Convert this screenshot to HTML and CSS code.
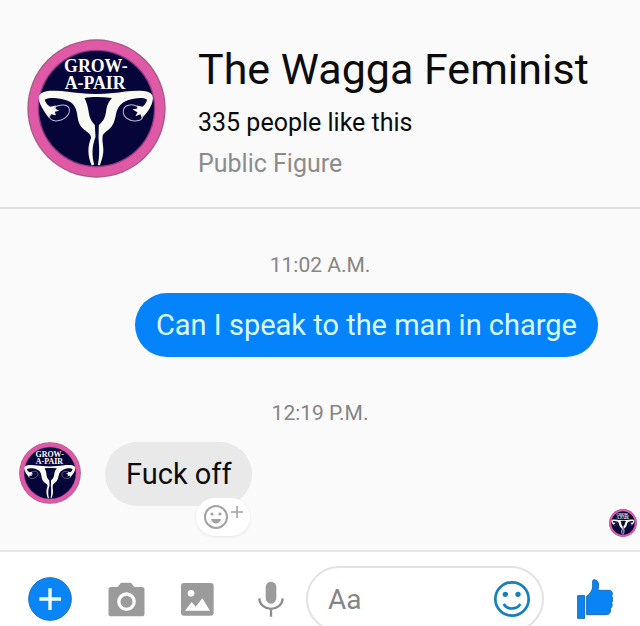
FILE: index.html
```html
<!DOCTYPE html>
<html lang="en">
<head>
<meta charset="utf-8">
<meta name="viewport" content="width=device-width, initial-scale=1">
<title>The Wagga Feminist</title>
<link rel="stylesheet" href="styles.css">
</head>
<body>
<svg class="sprite" aria-hidden="true">
  <symbol id="logo" viewBox="53 28 414 414">
    <circle cx="260" cy="235" r="206" fill="#a85a88"/>
    <circle cx="260" cy="235" r="202" fill="#df59a6"/>
    <circle cx="260" cy="235" r="175" fill="#8d3a80"/>
    <circle cx="260" cy="235" r="171" fill="#06053a"/>
    <text x="258" y="126" class="logo-text">GROW-</text>
    <text x="256" y="178" class="logo-text">A-PAIR</text>
    <g fill="#fafaf5">
      <path d="M88 204C88 188 106 182 128 182C160 181 184 187 208 189C242 193 276 193 310 189C336 186 362 181 392 182C414 182 430 190 428 206C426 226 414 244 400 258L395 265L391 252L376 258L382 246L367 238L382 235L380 226L397 230C405 222 411 214 410 208C396 200 370 205 351 211C334 217 322 231 318 252C314 272 311 284 298 296C286 307 278 310 278 321C276 340 286 358 276 386L270 404L264 403C270 376 268 352 266 322L267 284C282 272 287 258 289 240C291 224 299 212 306 204C276 200 244 200 224 204C231 216 235 232 237 248C239 264 246 276 255 284L257 320C246 348 246 374 253 402L246 405C234 378 232 350 244 322C243 309 230 305 218 293C206 281 205 268 202 250C199 228 188 216 172 211C152 204 124 201 106 208C107 216 113 224 122 230L140 226L138 236L149 242L136 245L139 255L125 252L119 264C102 242 89 222 88 204Z"/>
    </g>
    <g fill="none" stroke="#bcbcd8" stroke-width="3">
      <path d="M134 232C150 220 178 222 179 238C181 256 161 272 140 272C128 272 120 266 119 256"/>
      <path d="M382 229C364 219 342 225 340 241C337 260 356 272 376 272C390 272 398 266 398 256"/>
    </g>
  </symbol>
</svg>

<div class="app">
  <header class="profile">
    <svg class="avatar avatar-large" role="img" aria-label="Grow-a-pair logo"><use href="#logo"/></svg>
    <div class="profile-info">
      <h1 class="name">The Wagga Feminist</h1>
      <p class="likes">335 people like this</p>
      <p class="category">Public Figure</p>
    </div>
  </header>

  <main class="thread">
    <time class="stamp">11:02 A.M.</time>
    <div class="row row-sent">
      <p class="bubble bubble-sent">Can I speak to the man in charge</p>
    </div>
    <time class="stamp">12:19 P.M.</time>
    <div class="row row-received">
      <svg class="avatar avatar-medium" aria-hidden="true"><use href="#logo"/></svg>
      <div class="message">
        <p class="bubble bubble-received">Fuck off</p>
        <button class="react" type="button" aria-label="Add reaction">
          <svg width="40" height="28" viewBox="0 0 40 28" fill="none" stroke="#a3a3a3">
            <circle cx="13" cy="14" r="11" stroke-width="2"/>
            <path d="M8 16H18C17 22 9 22 8 16Z" fill="#a3a3a3" stroke="none"/>
            <circle cx="9" cy="11" r="1.6" fill="#a3a3a3" stroke="none"/>
            <circle cx="17" cy="11" r="1.6" fill="#a3a3a3" stroke="none"/>
            <path d="M34 3V15M28 9H40" stroke-width="1.6"/>
          </svg>
        </button>
      </div>
    </div>
    <div class="receipt">
      <svg class="avatar avatar-small" role="img" aria-label="Seen"><use href="#logo"/></svg>
    </div>
  </main>

  <form class="composer">
    <div class="tools">
      <button type="button" aria-label="More">
        <svg width="44" height="44" viewBox="84 97 132 132">
          <circle cx="150" cy="163" r="64" fill="#0a85f7" stroke="#1673c4" stroke-width="3"/>
          <path d="M150 131V196M118 163H183" stroke="#f2ffff" stroke-width="10"/>
        </svg>
      </button>
      <button type="button" aria-label="Camera">
        <svg width="37" height="35" viewBox="323 107 110 105">
          <path d="M332 122H352L359 112Q361 109 365 109H388Q392 109 394 112L401 122H424Q432 122 432 130V202Q432 210 424 210H332Q324 210 324 202V130Q324 122 332 122Z" fill="#9b9b9b"/>
          <circle cx="378" cy="166" r="23" fill="none" stroke="#fff" stroke-width="10"/>
        </svg>
      </button>
      <button type="button" aria-label="Photos">
        <svg width="33" height="33" viewBox="543 113 99 99">
          <rect x="543" y="113" width="98" height="98" rx="9" fill="#9b9b9b"/>
          <circle cx="573" cy="144" r="10" fill="#fff"/>
          <path d="M555 196L575 170L587 184L607 159L630 196Z" fill="#fff"/>
        </svg>
      </button>
      <button class="mic" type="button" aria-label="Voice message">
        <svg width="26" height="36" viewBox="770 111 78 108" fill="none">
          <rect x="793" y="113" width="32" height="66" rx="16" fill="#9b9b9b"/>
          <path d="M774 163C776 205 842 205 844 163M809 194V218" stroke="#8d8d8d" stroke-width="7"/>
        </svg>
      </button>
    </div>
    <div class="field">
      <input type="text" placeholder="Aa" aria-label="Message">
      <button type="button" aria-label="Emoji">
        <svg width="36" height="36" viewBox="582 109 108 108" fill="none" stroke="#167fbd">
          <circle cx="636" cy="163" r="50" stroke-width="8"/>
          <circle cx="616" cy="149" r="8" fill="#167fbd" stroke="none"/>
          <circle cx="654" cy="149" r="8" fill="#167fbd" stroke="none"/>
          <path d="M611 178C622 196 650 196 661 178" stroke-width="8"/>
        </svg>
      </button>
    </div>
    <button class="like" type="button" aria-label="Send a like">
      <svg width="36" height="40" viewBox="829 98 108 120" fill="#0a84f5" stroke="#1a6fb5" stroke-width="3">
        <path d="M831 148H852V216H831Z"/>
        <path d="M858 150C868 143 875 133 876 121V104C877 99 882 99 887 102C894 107 895 115 892 132H927C936 134 937 143 933 149C938 155 937 163 933 169C936 176 934 183 929 187C931 197 927 204 918 205H858Z"/>
      </svg>
    </button>
  </form>
</div>
</body>
</html>
```
FILE: styles.css
```css
* {
  box-sizing: border-box;
}

body {
  margin: 0;
  background: #fafafa;
  color: #0c0c0c;
  font-family: Roboto, "Liberation Sans", sans-serif;
}

h1,
p {
  margin: 0;
  font-weight: 400;
}

button {
  display: flex;
  align-items: center;
  justify-content: center;
  flex: none;
  padding: 0;
  border: 0;
  background: none;
  cursor: pointer;
}

.sprite {
  display: none;
}

.logo-text {
  fill: #fff;
  font-family: "Liberation Serif", serif;
  font-size: 53px;
  font-weight: 700;
  text-anchor: middle;
}

.app {
  display: flex;
  flex-direction: column;
  height: 100vh;
  overflow: hidden;
}

.avatar {
  display: block;
  flex: none;
}

.avatar-large {
  width: 139px;
  height: 139px;
}

.avatar-medium {
  width: 62px;
  height: 62px;
}

.avatar-small {
  width: 28px;
  height: 28px;
}

.profile {
  display: flex;
  flex: none;
  gap: 32px;
  padding: 39px 27px 23px;
  border-bottom: 2px solid #dedede;
}

.profile-info {
  padding-top: 4px;
}

.name {
  font-size: 43px;
  line-height: 52px;
}

.likes,
.category {
  font-size: 25px;
  line-height: 41px;
}

.likes {
  padding-top: 7px;
}

.category {
  color: #8c8c8c;
}

.thread {
  display: flex;
  flex: none;
  flex-direction: column;
  padding: 42px 0 13px;
}

.stamp {
  color: #858585;
  font-size: 21px;
  line-height: 28px;
  text-align: center;
}

.row {
  display: flex;
}

.row-sent {
  justify-content: flex-end;
  padding: 14px 42px 42px;
}

.row-received {
  gap: 24px;
  padding: 15px 19px 0;
}

.bubble {
  border-radius: 32px;
  font-size: 29px;
  line-height: 64px;
  padding: 0 21px;
}

.bubble-sent {
  background: #0583fb;
  color: #d9fcff;
}

.bubble-received {
  background: #e9e9e9;
}

.message {
  position: relative;
}

.react {
  position: absolute;
  right: 2px;
  bottom: -30px;
  width: 54px;
  height: 38px;
  border-radius: 19px;
  background: #fff;
  box-shadow: 0 1px 3px #e6e6e6;
}

.receipt {
  display: flex;
  justify-content: flex-end;
  padding: 3px 3px 0;
}

.composer {
  display: flex;
  flex: none;
  align-items: center;
  padding: 14px 27px 14px 28px;
  border-top: 2px solid #e6e6e6;
  background: #fff;
}

.tools {
  display: flex;
  align-items: center;
  gap: 36px;
}

.mic {
  width: 42px;
}

.field {
  display: flex;
  flex: 1;
  align-items: center;
  min-width: 0;
  height: 66px;
  margin: 0 33px 0 14px;
  padding: 0 12px 0 20px;
  border: 2px solid #e2e2e2;
  border-radius: 33px;
}

.field input {
  flex: 1;
  min-width: 0;
  padding: 0;
  border: 0;
  outline: 0;
  background: none;
  color: #0c0c0c;
  font: 28px Roboto, "Liberation Sans", sans-serif;
}

.field input::placeholder {
  color: #858585;
  opacity: 1;
}
```
